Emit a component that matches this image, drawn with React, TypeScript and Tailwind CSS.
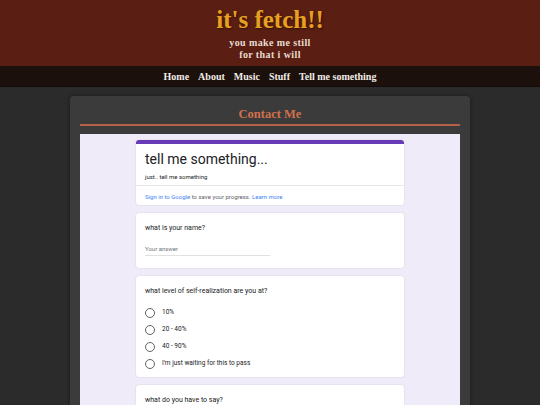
import { useState } from 'react';

const serif = { fontFamily: '"Liberation Serif", "DejaVu Serif", serif' };

function Radio({ label }: { label: string }) {
  return (
    <div className="flex items-center gap-[7px] h-[17px]">
      <span className="w-[10px] h-[10px] rounded-full border border-[#5f6368] shrink-0" />
      <span className="text-[6.5px] text-[#202124]">{label}</span>
    </div>
  );
}

function Card({ children, className = '' }: { children: React.ReactNode; className?: string }) {
  return (
    <div className={`bg-white rounded-[4px] border border-[#e6e2ee] ${className}`}>{children}</div>
  );
}

export default function App() {
  const [nav] = useState(['Home', 'About', 'Music', 'Stuff', 'Tell me something']);

  return (
    <div className="w-[540px] h-[405px] overflow-hidden bg-[#2b2b2b]" style={{ fontFamily: 'Roboto, Arial, sans-serif' }}>
      <div className="h-[66px] bg-[#5a1e12] flex flex-col items-center pt-[6px]" style={serif}>
        <div className="text-[25px] leading-[28px] font-bold text-[#e8a020] [text-shadow:1px_1px_2px_rgba(0,0,0,0.5)]">
          it's fetch!!
        </div>
        <div className="mt-[3px] text-[10px] leading-[12px] font-bold text-[#e8ddd0] text-center tracking-[0.4px]">
          you make me still
          <br />
          for that i will
        </div>
      </div>

      <div className="h-[21px] bg-[#1c100c] flex justify-center items-center gap-[9px] border-b border-[#140a08]" style={serif}>
        {nav.map((n) => (
          <span key={n} className="text-[10px] font-bold text-[#f2ece6]">{n}</span>
        ))}
      </div>

      <div className="mx-[70px] mt-[9px] bg-[#3b3b3b] rounded-t-[4px] px-[10px] shadow-[0_0_4px_rgba(0,0,0,0.4)] h-[320px]">
        <div
          className="h-[30px] pt-[10px] text-center text-[12.5px] leading-[16px] font-bold text-[#d2704c] border-b-2 border-[#b5614a]"
          style={serif}
        >
          Contact Me
        </div>
        <div className="mt-[8px] bg-[#f0ebf8] h-[290px] pt-[5px] flex flex-col items-center gap-[6px]">
          <div className="w-[270px] bg-white rounded-[4px] border border-[#e6e2ee] overflow-hidden">
            <div className="h-[4px] bg-[#673ab7]" />
            <div className="px-[9px] pt-[5px] pb-[4px] border-b border-[#e8e8e8]">
              <div className="text-[14px] leading-[20px] text-[#202124]">tell me something...</div>
              <div className="mt-[3px] text-[6px] leading-[9px] text-[#202124]">just.. tell me something</div>
            </div>
            <div className="px-[9px] h-[20px] flex items-center text-[6px] text-[#5f6368]">
              <span className="text-[#4285f4]">Sign in to Google</span>
              <span>&nbsp;to save your progress.&nbsp;</span>
              <span className="text-[#4285f4]">Learn more</span>
            </div>
          </div>

          <Card className="w-[270px] h-[58px] px-[9px] pt-[10px]">
            <div className="text-[7px] text-[#202124]">what is your name?</div>
            <div className="mt-[11px] w-[125px] border-b border-[#e0e0e0] pb-[2px] text-[6px] text-[#70757a]">Your answer</div>
          </Card>

          <Card className="w-[270px] h-[105px] px-[9px] pt-[10px]">
            <div className="text-[7px] text-[#202124]">what level of self-realization are you at?</div>
            <div className="mt-[8px] flex flex-col">
              <Radio label="10%" />
              <Radio label="20 - 40%" />
              <Radio label="40 - 90%" />
              <Radio label="I'm just waiting for this to pass" />
            </div>
          </Card>

          <Card className="w-[270px] h-[40px] px-[9px] pt-[10px]">
            <div className="text-[7px] text-[#202124]">what do you have to say?</div>
          </Card>
        </div>
      </div>
    </div>
  );
}
